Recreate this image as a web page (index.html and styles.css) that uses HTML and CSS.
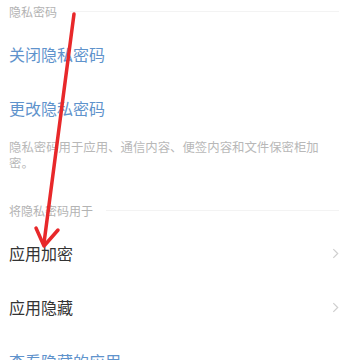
FILE: index.html
```html
<!DOCTYPE html>
<html lang="zh-CN">
<head>
  <meta charset="UTF-8" />
  <meta name="viewport" content="width=device-width, initial-scale=1.0"/>
  <title>隐私密码</title>
  <link rel="stylesheet" href="styles.css">
</head>
<body>

<div class="settings">
  <!-- Password section -->
  <div class="section-title">
    <span>隐私密码</span>
    <div class="section-line"></div>
  </div>
  <div class="row link">关闭隐私密码</div>
  <div class="row link">更改隐私密码</div>
  <p class="desc">隐私密码用于应用、通信内容、便签内容和文件保密柜加密。</p>

  <!-- Usage section -->
  <div class="section-title spaced">
    <span>将隐私密码用于</span>
    <div class="section-line"></div>
  </div>
  <div class="row">
    <span>应用加密</span>
    <svg class="chevron" viewBox="0 0 8 12"><polyline points="1.5,1 6.5,6 1.5,11" /></svg>
  </div>
  <div class="row">
    <span>应用隐藏</span>
    <svg class="chevron" viewBox="0 0 8 12"><polyline points="1.5,1 6.5,6 1.5,11" /></svg>
  </div>
  <div class="row link">查看隐藏的应用</div>
</div>

<!-- Red annotation arrow -->
<svg class="annotation" viewBox="0 0 360 360">
  <line x1="74" y1="14" x2="44" y2="243" />
  <polyline points="36,228 44,246 58,230" />
</svg>

</body>
</html>
```

FILE: styles.css
```css
/* Base Reset */
* { margin: 0; padding: 0; box-sizing: border-box; }
body {
  font-family: "Noto Sans CJK SC", "Noto Sans", sans-serif;
  background: #fff;
  overflow: hidden;
}

.settings {
  padding-left: 9px;
  padding-right: 21px;
}

/* Section headers */
.section-title {
  display: flex;
  align-items: center;
  gap: 13px;
  height: 22px;
  margin-bottom: 5px;
  font-size: 12px;
  color: #b3b3b3;
}
.section-title.spaced { margin-top: 28px; }

.section-line {
  flex: 1;
  height: 1px;
  background: #f3f3f3;
}

/* Rows */
.row {
  display: flex;
  align-items: center;
  justify-content: space-between;
  height: 54px;
  font-size: 16px;
  color: #333;
}
.row.link { color: #5f93cc; }

.chevron {
  width: 7px;
  height: 11px;
  fill: none;
  stroke: #cfcfcf;
  stroke-width: 1.4;
}

.desc {
  margin-top: 4px;
  font-size: 12.4px;
  line-height: 16px;
  color: #b8b8b8;
}

/* Overlay arrow */
.annotation {
  position: absolute;
  top: 0;
  left: 0;
  width: 360px;
  height: 360px;
  pointer-events: none;
}
.annotation line,
.annotation polyline {
  fill: none;
  stroke: #e8282a;
  stroke-width: 3.5;
  stroke-linecap: round;
  stroke-linejoin: round;
}
```
